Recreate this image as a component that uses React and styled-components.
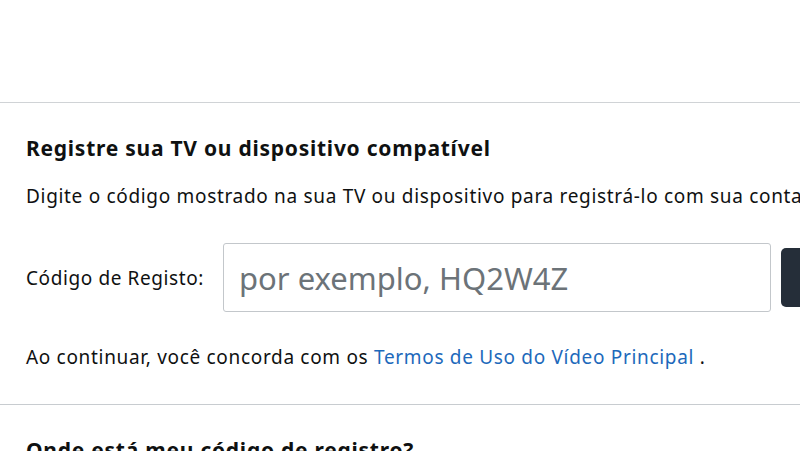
import React from 'react'
import styled, { createGlobalStyle } from 'styled-components'

const GlobalStyle = createGlobalStyle`
  html, body {
    margin: 0;
    padding: 0;
    background: #fff;
    overflow: hidden;
  }
  body {
    font-family: "Noto Sans", "Open Sans", Arial, sans-serif;
    color: #0f1111;
  }
`

const Page = styled.div`
  width: 1100px;
`

const TopBar = styled.header`
  height: 102px;
  border-bottom: 1px solid #d0d3d6;
`

const Section = styled.section`
  padding: 29px 26px ${p => (p.$divided ? '33px' : '0')};
  border-bottom: ${p => (p.$divided ? '1px solid #c8ccd0' : 'none')};
`

const Title = styled.h2`
  margin: 0;
  font-size: 21px;
  font-weight: 700;
  letter-spacing: 0.75px;
  line-height: 32px;
  color: #0f1111;
  white-space: nowrap;
`

const Text = styled.p`
  margin: ${p => p.$top || 0} 0 0;
  font-size: 19px;
  letter-spacing: 0.68px;
  line-height: 28px;
  white-space: nowrap;
`

const Link = styled.a`
  color: #1d69bb;
  text-decoration: none;
`

const CodeRow = styled.div`
  display: flex;
  align-items: center;
  margin-top: 33px;
`

const Label = styled.label`
  font-size: 19px;
  letter-spacing: 0.6px;
  width: 197px;
  white-space: nowrap;
`

const CodeInput = styled.input`
  box-sizing: border-box;
  width: 548px;
  height: 69px;
  padding: 0 15px;
  border: 1px solid #c3c7cb;
  border-radius: 3px;
  font-family: inherit;
  font-size: 31px;
  color: #0f1111;
  outline: none;
  &::placeholder {
    color: #6c7378;
  }
`

const RegisterButton = styled.button`
  margin-left: 10px;
  width: 280px;
  height: 59px;
  border: 0;
  border-radius: 5px;
  background: #252e39;
  color: #fff;
  font-family: inherit;
  font-size: 19px;
`

export default function App() {
  return (
    <>
      <GlobalStyle />
      <Page>
        <TopBar />
        <Section $divided>
          <Title>Registre sua TV ou dispositivo compatível</Title>
          <Text $top="18px">
            Digite o código mostrado na sua TV ou dispositivo para registrá-lo com sua conta.
          </Text>
          <CodeRow>
            <Label htmlFor="code">Código de Registo:</Label>
            <CodeInput id="code" placeholder="por exemplo, HQ2W4Z" />
            <RegisterButton>Registrar dispositivo</RegisterButton>
          </CodeRow>
          <Text $top="31px">
            Ao continuar, você concorda com os <Link href="#">Termos de Uso do Vídeo Principal</Link> .
          </Text>
        </Section>
        <Section>
          <Title>Onde está meu código de registro?</Title>
        </Section>
      </Page>
    </>
  )
}
